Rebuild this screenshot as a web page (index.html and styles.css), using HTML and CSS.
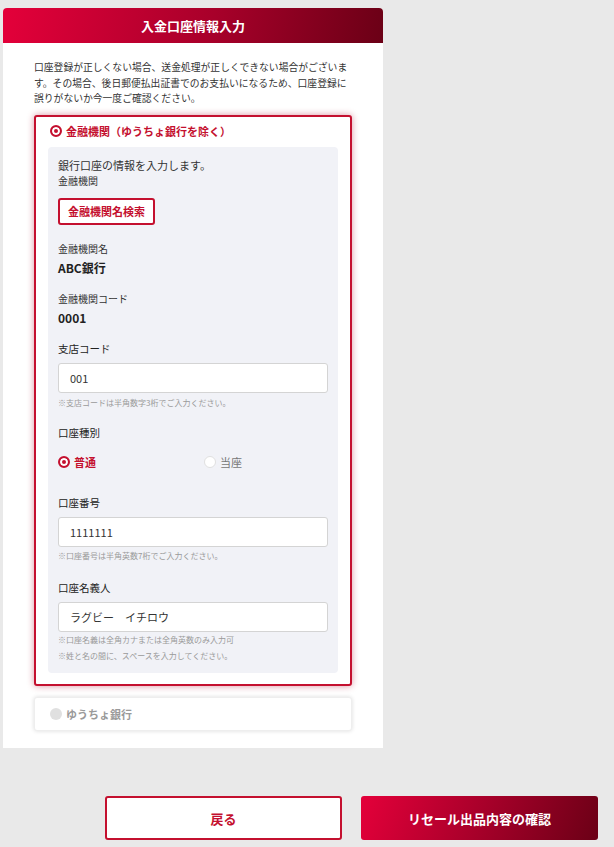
FILE: index.html
```html
<!DOCTYPE html>
<html lang="ja">
<head>
<meta charset="utf-8">
<title>入金口座情報入力</title>
<link rel="stylesheet" href="styles.css">
</head>
<body>
<div class="card">
  <div class="card-head">入金口座情報入力</div>
  <div class="card-body">
    <p class="lead">口座登録が正しくない場合、送金処理が正しくできない場合がございます。その場合、後日郵便払出証書でのお支払いになるため、口座登録に誤りがないか今一度ご確認ください。</p>

    <div class="opt opt-on">
      <div class="opt-label"><span class="radio radio-on"></span><span>金融機関（ゆうちょ銀行を除く）</span></div>
      <div class="panel">
        <div class="intro">銀行口座の情報を入力します。</div>
        <div class="sublabel tight">金融機関</div>
        <button class="search-btn" type="button">金融機関名検索</button>

        <div class="sublabel gap17">金融機関名</div>
        <div class="value">ABC銀行</div>

        <div class="sublabel gap16">金融機関コード</div>
        <div class="value">0001</div>

        <div class="label gap16">支店コード</div>
        <div class="input">001</div>
        <div class="note gap4">※支店コードは半角数字3桁でご入力ください。</div>

        <div class="label gap17">口座種別</div>
        <div class="radios">
          <div class="ritem ritem-on"><span class="radio radio-on"></span><span>普通</span></div>
          <div class="ritem"><span class="radio radio-off"></span><span>当座</span></div>
        </div>

        <div class="label gap26">口座番号</div>
        <div class="input">1111111</div>
        <div class="note gap3">※口座番号は半角英数7桁でご入力ください。</div>

        <div class="label gap19">口座名義人</div>
        <div class="input input-name">ラグビー　イチロウ</div>
        <div class="note notes">※口座名義は全角カナまたは全角英数のみ入力可</div>
        <div class="note notes">※姓と名の間に、スペースを入力してください。</div>
      </div>
    </div>

    <div class="opt opt-off">
      <div class="opt-label"><span class="radio radio-dis"></span><span>ゆうちょ銀行</span></div>
    </div>
  </div>
</div>

<div class="actions">
  <button class="btn btn-back" type="button">戻る</button>
  <button class="btn btn-next" type="button">リセール出品内容の確認</button>
</div>
</body>
</html>
```

FILE: styles.css
```css
* { box-sizing: border-box; }
html, body { margin: 0; padding: 0; }
body {
  background: #e9e9e9;
  font-family: "Noto Sans CJK JP", "Noto Sans", sans-serif;
  color: #333;
  width: 614px;
  padding-top: 8px;
}
.card {
  margin-left: 3px;
  width: 380px;
  background: #fff;
  border-radius: 4px 4px 0 0;
}
.card-head {
  height: 35px;
  line-height: 35px;
  text-align: center;
  color: #fff;
  font-weight: 700;
  font-size: 13px;
  background: linear-gradient(100deg, #e4003a 0%, #a8002a 55%, #6b0016 100%);
  border-radius: 4px 4px 0 0;
}
.card-body {
  padding: 17px 31px 17px 31px;
}
.lead {
  margin: 0;
  font-size: 9.8px;
  line-height: 15.5px;
  color: #333;
}
.opt {
  background: #fff;
  border-radius: 3px;
}
.opt-on {
  margin-top: 8.5px;
  border: 2px solid #c4102f;
  box-shadow: 0 0 7px rgba(176, 16, 46, 0.45);
  padding-bottom: 11px;
}
.opt-off {
  margin-top: 11px;
  height: 34px;
  box-shadow: 0 0 4px rgba(0, 0, 0, 0.14);
  border: 1px solid #eee;
}
.opt-label {
  display: flex;
  align-items: center;
  gap: 4px;
  padding: 6px 14px;
  line-height: 16px;
  font-size: 11px;
  font-weight: 700;
  color: #c4102f;
}
.opt-off .opt-label {
  padding: 8px 15px;
  color: #9a9a9a;
}
.radio {
  display: inline-block;
  width: 12px;
  height: 12px;
  border-radius: 50%;
  flex: none;
}
.radio-on {
  border: 2px solid #c4102f;
  background: #c4102f;
  box-shadow: inset 0 0 0 2px #fff;
}
.radio-off {
  background: #fff;
  border: 1px solid #e0e0e0;
}
.radio-dis {
  background: #e0e0e0;
}
.panel {
  margin: 2px 12px 0 12px;
  background: #f1f2f7;
  border-radius: 4px;
  padding: 10px 10px 9px 10px;
}
.intro {
  font-size: 11px;
  line-height: 16px;
  color: #333;
}
.sublabel {
  font-size: 10px;
  line-height: 14px;
  color: #333;
}
.tight { margin-top: 1px; }
.gap17 { margin-top: 17px; }
.gap16 { margin-top: 16px; }
.gap26 { margin-top: 26px; }
.gap19 { margin-top: 19px; }
.gap4 { margin-top: 4px; }
.gap3 { margin-top: 3px; }
.search-btn {
  display: block;
  margin-top: 10px;
  height: 27px;
  padding: 0 8px;
  background: #fff;
  border: 2px solid #c4102f;
  border-radius: 3px;
  color: #c4102f;
  font-family: inherit;
  font-weight: 700;
  font-size: 11px;
  line-height: 23px;
}
.value {
  margin-top: 4px;
  font-size: 12px;
  font-weight: 700;
  line-height: 16px;
  color: #222;
}
.label {
  font-size: 10.5px;
  line-height: 14px;
  color: #222;
  font-weight: 400;
}
.input {
  margin-top: 7px;
  height: 30px;
  background: #fff;
  border: 1px solid #d4d4d4;
  border-radius: 3px;
  padding: 0 11px;
  font-size: 11px;
  line-height: 28px;
  color: #333;
}
.note {
  font-size: 8px;
  line-height: 12px;
  color: #9a9a9a;
}
.notes { line-height: 16px; }
.radios {
  margin-top: 14px;
  display: flex;
  line-height: 16px;
  font-size: 11px;
}
.ritem {
  display: flex;
  align-items: center;
  gap: 4px;
  color: #777;
}
.ritem-on {
  width: 146px;
  color: #c4102f;
  font-weight: 700;
}
.actions {
  margin-top: 48px;
  display: flex;
  justify-content: flex-end;
  gap: 19px;
  padding-right: 16px;
}
.btn {
  width: 237px;
  height: 44px;
  border-radius: 3px;
  font-family: inherit;
  font-weight: 700;
  font-size: 13px;
}
.btn-back {
  background: #fff;
  border: 2px solid #c4102f;
  color: #c4102f;
}
.btn-next {
  border: none;
  color: #fff;
  background: linear-gradient(110deg, #e4003a 0%, #a8002a 50%, #6b0016 100%);
}
```
